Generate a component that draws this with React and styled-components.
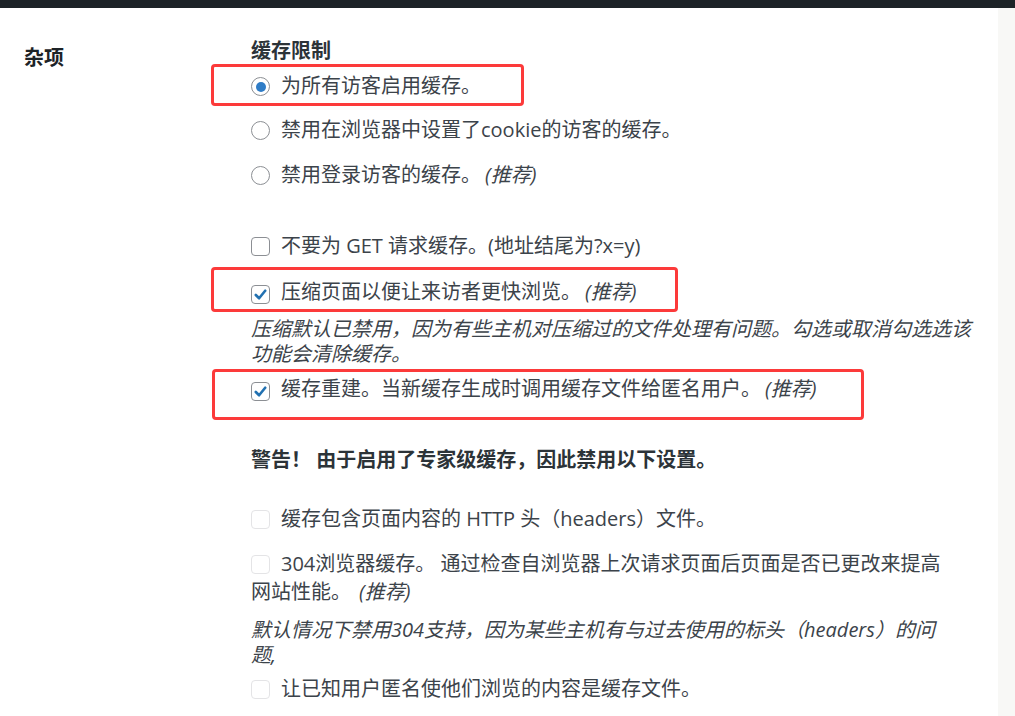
import React from "react";
import styled, { createGlobalStyle } from "styled-components";

const GlobalStyle = createGlobalStyle`
  html, body {
    margin: 0;
    padding: 0;
    background: #fff;
  }
  body {
    font-family: "Open Sans", "Noto Sans CJK SC", sans-serif;
    color: #3c434a;
    font-size: 20px;
  }
`;

const TopBar = styled.div`
  height: 8px;
  background: #1d2327;
`;

const Page = styled.div`
  display: flex;
  min-height: 708px;
`;

const Main = styled.main`
  flex: 1;
  display: flex;
  background: #fff;
`;

const Aside = styled.div`
  width: 17px;
  background: #f8f8f6;
`;

const Label = styled.div`
  width: 251px;
  box-sizing: border-box;
  padding: 36px 0 0 24px;
  font-weight: 700;
  color: #1d2327;
  line-height: 28px;
`;

const Content = styled.div`
  width: 705px;
  padding-top: 29px;
`;

const Title = styled.div`
  font-weight: 700;
  color: #2c3338;
  line-height: 28px;
`;

const Row = styled.label`
  position: relative;
  display: block;
  line-height: 28px;
  margin-top: ${(p) => p.$mt || 0}px;
`;

const Note = styled.p`
  width: ${(p) => p.$w || 705}px;
  margin: ${(p) => p.$mt || 0}px 0 0;
  font-style: italic;
  line-height: 25px;
`;

const Rec = styled.em`
  font-style: italic;
  margin-left: ${(p) => p.$gap ?? 4}px;
`;

const Warning = styled.div`
  font-weight: 700;
  color: #2c3338;
  line-height: 28px;
  margin-top: 43px;
`;

const Radio = styled.span`
  display: inline-block;
  vertical-align: -3px;
  width: 19px;
  height: 19px;
  box-sizing: border-box;
  border: 1px solid #8c8f94;
  border-radius: 50%;
  margin-right: 11px;
  position: relative;
  &::after {
    content: "";
    display: ${(p) => (p.$on ? "block" : "none")};
    position: absolute;
    left: 3.5px;
    top: 3.5px;
    width: 10px;
    height: 10px;
    border-radius: 50%;
    background: #2f7cc6;
  }
`;

const Box = styled.span`
  display: inline-flex;
  align-items: center;
  justify-content: center;
  vertical-align: -3px;
  width: 19px;
  height: 19px;
  box-sizing: border-box;
  border: 1px solid ${(p) => (p.$disabled ? "#e4e4e6" : "#8c8f94")};
  border-radius: 4px;
  margin-right: 11px;
  background: #fff;
`;

const Mark = styled.span`
  position: absolute;
  left: ${(p) => p.$left}px;
  top: ${(p) => p.$top}px;
  width: ${(p) => p.$w}px;
  height: ${(p) => p.$h}px;
  box-sizing: border-box;
  border: 3px solid #fc3a3a;
  border-radius: 4px;
  pointer-events: none;
`;

const Check = () => (
  <svg width="15" height="15" viewBox="0 0 16 16">
    <path d="M3 8.5 L6.5 12 L13 4" fill="none" stroke="#2271b1" strokeWidth="2.8" strokeLinecap="round" strokeLinejoin="round" />
  </svg>
);

const Checkbox = ({ checked, disabled }) => (
  <Box $disabled={disabled}>{checked && <Check />}</Box>
);

export default function App() {
  return (
    <>
      <GlobalStyle />
      <TopBar />
      <Page>
        <Main>
          <Label>杂项</Label>
          <Content>
            <Title>缓存限制</Title>
            <Row $mt={7}>
              <Mark $left={-40} $top={-8} $w={313} $h={42} />
              <Radio $on />为所有访客启用缓存。
            </Row>
            <Row $mt={16}>
              <Radio />禁用在浏览器中设置了cookie的访客的缓存。
            </Row>
            <Row $mt={17}>
              <Radio />禁用登录访客的缓存。<Rec>(推荐)</Rec>
            </Row>

            <Row $mt={43}>
              <Checkbox />不要为 GET 请求缓存。(地址结尾为?x=y)
            </Row>
            <Row $mt={18}>
              <Mark $left={-40} $top={-11} $w={467} $h={45} />
              <Checkbox checked />压缩页面以便让来访者更快浏览。<Rec>(推荐)</Rec>
            </Row>
            <Note $mt={10} $w={724}>
              压缩默认已禁用，因为有些主机对压缩过的文件处理有问题。勾选或取消勾选选该功能会清除缓存。
            </Note>
            <Row $mt={9}>
              <Mark $left={-39} $top={-6} $w={652} $h={51} />
              <Checkbox checked />缓存重建。当新缓存生成时调用缓存文件给匿名用户。<Rec>(推荐)</Rec>
            </Row>

            <Warning>警告！ 由于启用了专家级缓存，因此禁用以下设置。</Warning>
            <Row $mt={31}>
              <Checkbox disabled />缓存包含页面内容的 HTTP 头（headers）文件。
            </Row>
            <Row $mt={17}>
              <Checkbox disabled />304浏览器缓存。 通过检查自浏览器上次请求页面后页面是否已更改来提高网站性能。<Rec $gap={8}>(推荐)</Rec>
            </Row>
            <Note $mt={11} $w={698}>
              默认情况下禁用304支持，因为某些主机有与过去使用的标头（headers）的问题,
            </Note>
            <Row $mt={8}>
              <Checkbox disabled />让已知用户匿名使他们浏览的内容是缓存文件。
            </Row>
          </Content>
        </Main>
        <Aside />
      </Page>
    </>
  );
}
